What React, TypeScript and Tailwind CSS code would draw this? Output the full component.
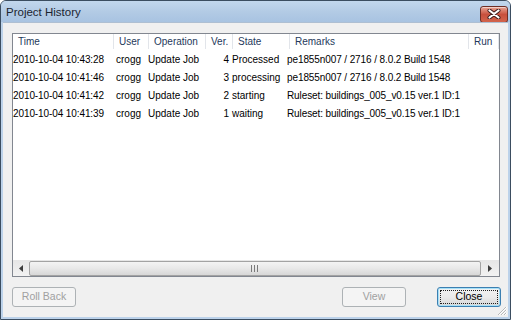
import React from "react";

const rows = [
    { time: "2010-10-04 10:43:28", user: "crogg", op: "Update Job", ver: "4", state: "Processed", remarks: "pe1855n007 / 2716 / 8.0.2 Build 1548" },
    { time: "2010-10-04 10:41:46", user: "crogg", op: "Update Job", ver: "3", state: "processing", remarks: "pe1855n007 / 2716 / 8.0.2 Build 1548" },
    { time: "2010-10-04 10:41:42", user: "crogg", op: "Update Job", ver: "2", state: "starting", remarks: "Ruleset: buildings_005_v0.15 ver.1 ID:1" },
    { time: "2010-10-04 10:41:39", user: "crogg", op: "Update Job", ver: "1", state: "waiting", remarks: "Ruleset: buildings_005_v0.15 ver.1 ID:1" }
];

const headers = [
    { text: "Time", w: "w-[101px]" },
    { text: "User", w: "w-[35px]" },
    { text: "Operation", w: "w-[57px]" },
    { text: "Ver.", w: "w-[27px]" },
    { text: "State", w: "w-[57px]" },
    { text: "Remarks", w: "w-[179px]" },
    { text: "Run", w: "w-[30px]" }
];

const CloseX = () => (
    <svg width="14" height="10" viewBox="0 0 14 10">
        <path d="M2.5 1.5 L11.5 8.5 M11.5 1.5 L2.5 8.5" stroke="#3a1a1a" strokeWidth="4" strokeLinecap="round" />
        <path d="M2.5 1.5 L11.5 8.5 M11.5 1.5 L2.5 8.5" stroke="#ffffff" strokeWidth="2.2" strokeLinecap="round" />
    </svg>
);

const App = () => {
    return (
        <div className="w-[511px] h-[320px] bg-white" style={{ fontFamily: '"Liberation Sans", Arial, sans-serif' }}>
            <div className="w-[511px] h-[320px] border border-[#3b4d60] rounded-t-[6px] flex flex-col overflow-hidden bg-[#bcd2ea]">
                {/* title bar */}
                <div className="h-[21px] shrink-0 flex items-center justify-between bg-gradient-to-b from-[#c2d7ed] via-[#b3cbe5] to-[#a8c3e1] pl-[5px] pr-[2px]">
                    <span className="text-[11.5px] text-[#1b2430] pt-[3px]">Project History</span>
                    <div className="w-[28px] h-[17px] mt-[5px] rounded-[3px] border border-[#6e2f26] bg-gradient-to-b from-[#e8a595] via-[#c8503d] to-[#d2644c] flex items-center justify-center shadow-[inset_0_1px_0_rgba(255,255,255,0.5)]">
                        <CloseX />
                    </div>
                </div>
                {/* body */}
                <div className="flex-1 mx-[2px] mb-[2px] bg-[#f0f0f0] relative flex flex-col border-t border-[#aebfd2]">
                    <div className="ml-[9px] mt-[10px] w-[488px] h-[244px] border border-[#828790] bg-white flex flex-col">
                        <div className="flex h-[15px] text-[10px] text-[#1e395b] bg-white">
                            {headers.map((h, i) => (
                                <div key={i} className={`${h.w} h-full flex items-center pl-[5px] border-r border-[#e2e5ea]`}>
                                    {h.text}
                                </div>
                            ))}
                        </div>
                        <div className="flex flex-col text-[10px] text-black pt-px">
                            {rows.map((r, i) => (
                                <div key={i} className="flex h-[18px] items-center whitespace-nowrap">
                                    <div className="w-[103px] tracking-[-0.1px]">{r.time}</div>
                                    <div className="w-[32px]">{r.user}</div>
                                    <div className="w-[62px]">{r.op}</div>
                                    <div className="w-[20px] text-right pr-px">{r.ver}</div>
                                    <div className="w-[57px] pl-[2px]">{r.state}</div>
                                    <div className="flex-1 tracking-[-0.1px]">{r.remarks}</div>
                                </div>
                            ))}
                        </div>
                        <div className="flex-1" />
                        {/* horizontal scrollbar */}
                        <div className="h-[16px] flex items-center bg-gradient-to-b from-[#e6e6e6] to-[#f2f2f2]">
                            <div className="w-[16px] h-full flex items-center justify-center">
                                <svg width="4" height="7" viewBox="0 0 4 7"><path d="M4 0 L0 3.5 L4 7 Z" fill="#3d3d3d" /></svg>
                            </div>
                            <div className="w-[452px] h-[15px] rounded-[2px] border border-[#a3a3a3] bg-gradient-to-b from-[#f4f4f4] via-[#e8e8e8] to-[#d7d7d7] flex items-center justify-center">
                                <svg width="8" height="7" viewBox="0 0 8 7">
                                    <path d="M0.5 0 V7 M3.5 0 V7 M6.5 0 V7" stroke="#7a7a7a" strokeWidth="1" />
                                </svg>
                            </div>
                            <div className="flex-1 h-full flex items-center justify-center">
                                <svg width="4" height="7" viewBox="0 0 4 7"><path d="M0 0 L4 3.5 L0 7 Z" fill="#3d3d3d" /></svg>
                            </div>
                        </div>
                    </div>
                    {/* buttons */}
                    <div className="flex items-center mt-[10px] ml-[9px] w-[489px] text-[10.5px]">
                        <div className="w-[64px] h-[20px] rounded-[3px] border border-[#adb2b5] bg-[#f4f4f4] text-[#a0a0a0] flex items-center justify-center">
                            Roll Back
                        </div>
                        <div className="flex-1" />
                        <div className="w-[64px] h-[20px] rounded-[3px] border border-[#adb2b5] bg-[#f4f4f4] text-[#a0a0a0] flex items-center justify-center">
                            View
                        </div>
                        <div className="w-[31px]" />
                        <div className="w-[64px] h-[20px] rounded-[3px] border border-[#3c7fb1] bg-gradient-to-b from-[#f2f2f2] via-[#ebebeb] to-[#d6d6d6] p-[2px] shadow-[inset_0_0_0_1px_#a6e0f8]">
                            <div className="w-full h-full border border-dotted border-[#202020] text-black flex items-center justify-center">
                                Close
                            </div>
                        </div>
                    </div>
                    {/* resize grip */}
                    <svg className="absolute right-[1px] bottom-[1px]" width="10" height="10" viewBox="0 0 10 10">
                        <path d="M9 1 L1 9 M9 4 L4 9 M9 7 L7 9" stroke="#b8b8b8" strokeWidth="1" />
                        <path d="M10 1 L2 9 M10 4 L5 9 M10 7 L8 9" stroke="#ffffff" strokeWidth="1" />
                    </svg>
                </div>
            </div>
        </div>
    );
};

export default App;
